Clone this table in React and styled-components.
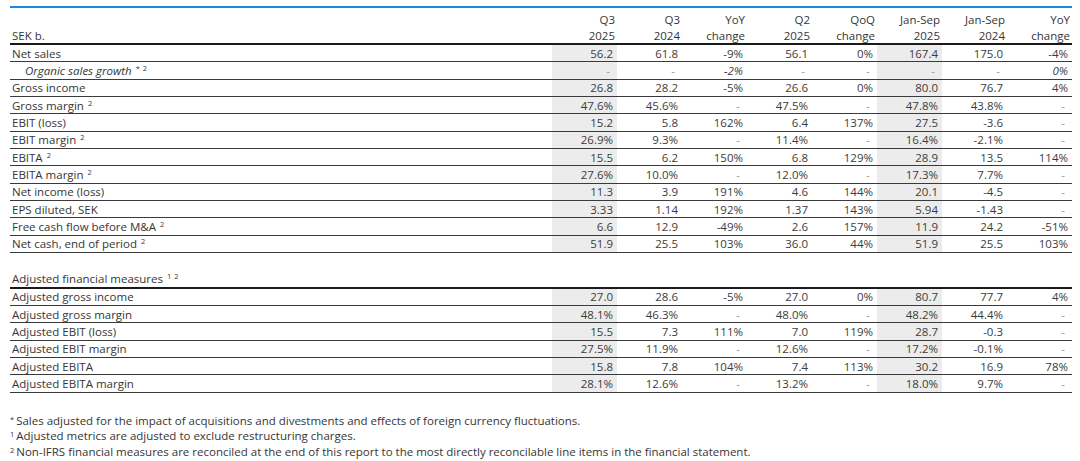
import React from 'react';
import styled, { createGlobalStyle } from 'styled-components';

const GlobalStyle = createGlobalStyle`
  html, body { margin: 0; padding: 0; background: #ffffff; }
  body { font-family: "Open Sans", "Liberation Sans", sans-serif; }
`;

const COLS = '542px repeat(8, 65px)';

const Page = styled.div`
  padding: 6px 8px 0 10px;
  width: 1062px;
  color: #363636;
  font-size: 11.5px;
`;

const TopRule = styled.div`
  height: 2px;
  background: #1a86e6;
`;

const HeaderRow = styled.div`
  display: grid;
  grid-template-columns: ${COLS};
  align-items: end;
  height: 37px;
  box-sizing: border-box;
  border-bottom: 2px solid #1a1a1a;
`;

const HeadCell = styled.div`
  line-height: 16px;
  margin-bottom: -1px;
  text-align: ${(p) => (p.$left ? 'left' : 'right')};
  padding: ${(p) => (p.$left ? '0 0 0 2px' : '0 2px 0 0')};
`;

const Row = styled.div`
  display: grid;
  grid-template-columns: ${COLS};
  height: ${(p) => (p.$thick ? '18.33px' : '17.33px')};
  box-sizing: border-box;
  border-bottom: ${(p) => (p.$thick ? '2px solid #1a1a1a' : p.$blank ? 'none' : '1px solid #3a3a3a')};
`;

const Label = styled.div`
  display: flex;
  align-items: center;
  padding-left: ${(p) => (p.$indent ? '15px' : '2px')};
  font-style: ${(p) => (p.$italic ? 'italic' : 'normal')};
  white-space: nowrap;
`;

const Value = styled.div`
  display: flex;
  align-items: center;
  justify-content: flex-end;
  padding-right: 4px;
  background: ${(p) => (p.$shade ? '#ebeceb' : 'transparent')};
  font-style: ${(p) => (p.$italic ? 'italic' : 'normal')};
  color: #3c3c3c;
  white-space: nowrap;
`;

const Dash = styled.span`
  color: #9a9a9a;
  font-style: normal;
  margin-right: 3px;
`;

const Sup = styled.span`
  font-size: 7.5px;
  position: relative;
  top: -4px;
  margin-left: 4px;
  font-style: normal;
  word-spacing: 1px;
`;

const Notes = styled.div`
  margin-top: 20px;
  color: #363636;
`;

const Note = styled.div`
  height: 15.5px;
  line-height: 15.5px;
  white-space: nowrap;
`;

const NoteMark = styled.span`
  font-size: 7.5px;
  line-height: 0;
  position: relative;
  top: -3px;
  margin-right: 2px;
`;

const SHADED = [0, 5];

const headers = [
  ['Q3', '2025'],
  ['Q3', '2024'],
  ['YoY', 'change'],
  ['Q2', '2025'],
  ['QoQ', 'change'],
  ['Jan-Sep', '2025'],
  ['Jan-Sep', '2024'],
  ['YoY', 'change'],
];

const mainRows = [
  { label: 'Net sales', values: ['56.2', '61.8', '-9%', '56.1', '0%', '167.4', '175.0', '-4%'] },
  { label: 'Organic sales growth', sup: '* 2', italic: true, indent: true, values: ['-', '-', '-2%', '-', '-', '-', '-', '0%'] },
  { label: 'Gross income', values: ['26.8', '28.2', '-5%', '26.6', '0%', '80.0', '76.7', '4%'] },
  { label: 'Gross margin', sup: '2', values: ['47.6%', '45.6%', '-', '47.5%', '-', '47.8%', '43.8%', '-'] },
  { label: 'EBIT (loss)', values: ['15.2', '5.8', '162%', '6.4', '137%', '27.5', '-3.6', '-'] },
  { label: 'EBIT margin', sup: '2', values: ['26.9%', '9.3%', '-', '11.4%', '-', '16.4%', '-2.1%', '-'] },
  { label: 'EBITA', sup: '2', values: ['15.5', '6.2', '150%', '6.8', '129%', '28.9', '13.5', '114%'] },
  { label: 'EBITA margin', sup: '2', values: ['27.6%', '10.0%', '-', '12.0%', '-', '17.3%', '7.7%', '-'] },
  { label: 'Net income (loss)', values: ['11.3', '3.9', '191%', '4.6', '144%', '20.1', '-4.5', '-'] },
  { label: 'EPS diluted, SEK', values: ['3.33', '1.14', '192%', '1.37', '143%', '5.94', '-1.43', '-'] },
  { label: 'Free cash flow before M&A', sup: '2', values: ['6.6', '12.9', '-49%', '2.6', '157%', '11.9', '24.2', '-51%'] },
  { label: 'Net cash, end of period', sup: '2', values: ['51.9', '25.5', '103%', '36.0', '44%', '51.9', '25.5', '103%'] },
];

const adjustedRows = [
  { label: 'Adjusted gross income', values: ['27.0', '28.6', '-5%', '27.0', '0%', '80.7', '77.7', '4%'] },
  { label: 'Adjusted gross margin', values: ['48.1%', '46.3%', '-', '48.0%', '-', '48.2%', '44.4%', '-'] },
  { label: 'Adjusted EBIT (loss)', values: ['15.5', '7.3', '111%', '7.0', '119%', '28.7', '-0.3', '-'] },
  { label: 'Adjusted EBIT margin', values: ['27.5%', '11.9%', '-', '12.6%', '-', '17.2%', '-0.1%', '-'] },
  { label: 'Adjusted EBITA', values: ['15.8', '7.8', '104%', '7.4', '113%', '30.2', '16.9', '78%'] },
  { label: 'Adjusted EBITA margin', values: ['28.1%', '12.6%', '-', '13.2%', '-', '18.0%', '9.7%', '-'] },
];

function DataRow({ row }) {
  return (
    <Row>
      <Label $indent={row.indent} $italic={row.italic}>
        <span>
          {row.label}
          {row.sup && <Sup>{row.sup}</Sup>}
        </span>
      </Label>
      {row.values.map((v, i) => (
        <Value key={i} $shade={SHADED.includes(i)} $italic={row.italic}>
          {v === '-' ? <Dash>-</Dash> : v}
        </Value>
      ))}
    </Row>
  );
}

export default function App() {
  return (
    <>
      <GlobalStyle />
      <Page>
        <TopRule />
        <HeaderRow>
          <HeadCell $left>SEK b.</HeadCell>
          {headers.map(([a, b], i) => (
            <HeadCell key={i}>
              {a}
              <br />
              {b}
            </HeadCell>
          ))}
        </HeaderRow>
        {mainRows.map((r) => (
          <DataRow key={r.label} row={r} />
        ))}
        <Row $blank />
        <Row $thick>
          <Label>
            <span>
              Adjusted financial measures<Sup>1 2</Sup>
            </span>
          </Label>
        </Row>
        {adjustedRows.map((r) => (
          <DataRow key={r.label} row={r} />
        ))}
        <Notes>
          <Note>
            <NoteMark>*</NoteMark>Sales adjusted for the impact of acquisitions and divestments and effects of foreign currency fluctuations.
          </Note>
          <Note>
            <NoteMark>1</NoteMark>Adjusted metrics are adjusted to exclude restructuring charges.
          </Note>
          <Note>
            <NoteMark>2</NoteMark>Non-IFRS financial measures are reconciled at the end of this report to the most directly reconcilable line items in the financial statement.
          </Note>
        </Notes>
      </Page>
    </>
  );
}
